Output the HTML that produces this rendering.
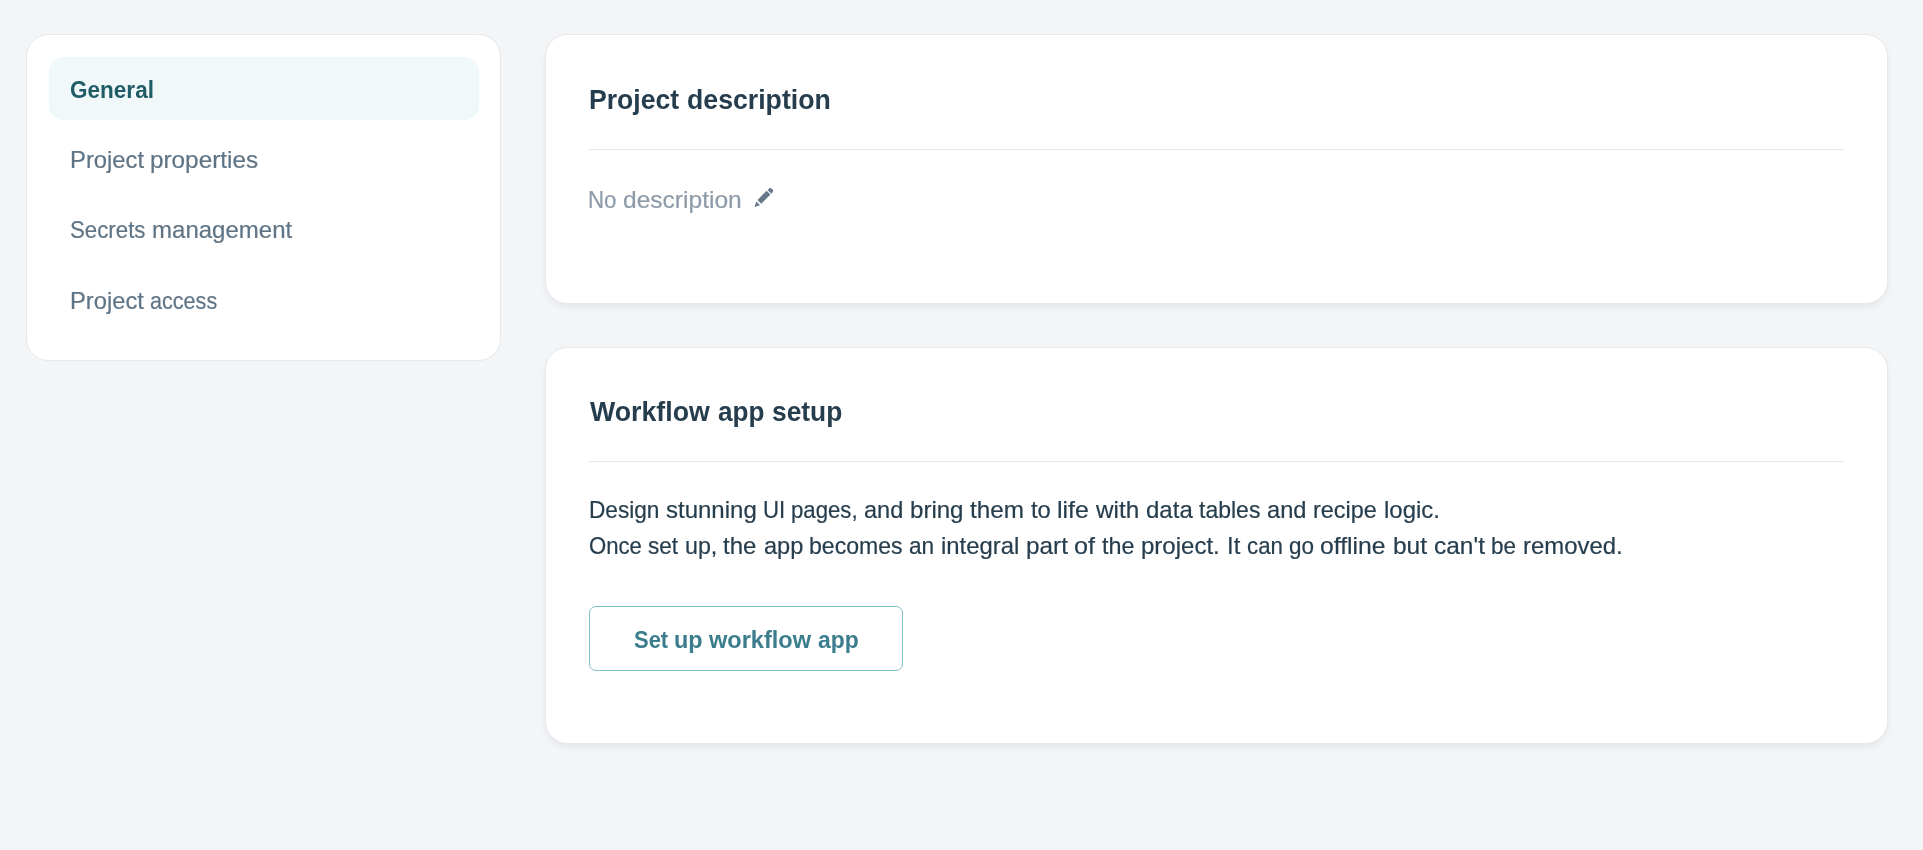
<!DOCTYPE html>
<html lang="en">
<head>
<meta charset="utf-8">
<title>Project settings</title>
<style>
  html, body { margin: 0; padding: 0; }
  body {
    width: 1923px; height: 850px; overflow: hidden; position: relative;
    background: #f3f5f7;
    font-family: "Liberation Sans", sans-serif;
    color: #263d4d;
  }
  .card {
    position: absolute; box-sizing: border-box;
    background: #fff; border: 1px solid #e5e9ec; border-radius: 22.4px;
  }
  .shadow { box-shadow: 0 4px 8px -2px rgba(40, 50, 60, 0.085); }
  .t {
    position: absolute; left: 0; width: 1923px; height: 30px; white-space: nowrap; margin: 0; will-change: transform;
    line-height: 30px; font-size: 24px; font-weight: normal; -webkit-text-stroke: 0.2px currentColor;
  }
  .t span { position: absolute; top: 0; display: block; transform-origin: 0 0; white-space: pre; }
  .b { font-weight: bold; -webkit-text-stroke: 0; }
  .h { -webkit-text-stroke: 0; font-size: 27.6px; font-weight: bold; line-height: 34px; height: 34px; color: #263d4d; }
  a.t { text-decoration: none; }
  .nav { color: #5f7485; }
  .pencil { position: absolute; left: 748px; top: 183px; }
  .active-bg { position: absolute; left: 49px; top: 57px; width: 430px; height: 63px; border-radius: 14.4px; background: #f0f8fa; }
  .hr { position: absolute; height: 1px; background: #e2e7eb; left: 589px; width: 1255px; }
  .btn { position: absolute; box-sizing: border-box; left: 589px; top: 606px; width: 314px; height: 65px; margin: 0; padding: 0; border: 1px solid #80c0c9; border-radius: 7px; background: #fff; font: inherit; color: inherit; text-align: left; overflow: visible; appearance: none; -webkit-appearance: none; cursor: pointer; }
</style>
</head>
<body>

<nav aria-label="Project settings">
  <div class="card" style="left:26px; top:34px; width:475px; height:327px;"></div>
  <div class="active-bg"></div>
  <a class="t b" role="link" tabindex="0" aria-current="page" style="top:75px; color:#1f5c66;"><span style="left:70.08px; transform:scaleX(0.9389);">General</span></a>
  <a class="t nav" role="link" tabindex="0" style="top:145px;"><span style="left:69.65px; transform:scaleX(0.9921);">Project </span><span style="left:150.33px; transform:scaleX(1.0124);">properties</span></a>
  <a class="t nav" role="link" tabindex="0" style="top:215px;"><span style="left:69.99px; transform:scaleX(0.9273);">Secrets </span><span style="left:151.50px; transform:scaleX(1.0013);">management</span></a>
  <a class="t nav" role="link" tabindex="0" style="top:286px;"><span style="left:69.65px; transform:scaleX(0.9886);">Project </span><span style="left:150.18px; transform:scaleX(0.8996);">access</span></a>
</nav>

<main>
  <section aria-label="Project description">
    <div class="card shadow" style="left:545px; top:34px; width:1343px; height:270px;"></div>
    <h2 class="t h" style="top:83px;"><span style="left:589.02px; transform:scaleX(0.9630);">Project </span><span style="left:686.51px; transform:scaleX(0.9670);">description</span></h2>
    <div class="hr" style="top:149px;"></div>
    <p class="t" style="top:185px; color:#8d9ba8;"><span style="left:588.47px; transform:scaleX(0.9289);">No </span><span style="left:623.07px; transform:scaleX(1.0229);">description</span></p>
    <svg class="pencil" width="32" height="30" viewBox="748 183 32 30" role="img" aria-label="Edit description">
      <g transform="translate(754.5 206.8) rotate(-45)" fill="#65798a">
        <polygon points="-0.1,0.2 5.0,-2.5 5.0,2.9"/>
        <rect x="6.9" y="-2.75" width="13.0" height="5.4"/>
        <path d="M21.1 -2.6 H22.7 A2.3 2.3 0 0 1 25.0 -0.3 V0.35 A2.3 2.3 0 0 1 22.7 2.65 H21.1 Z"/>
      </g>
    </svg>
  </section>

  <section aria-label="Workflow app setup">
    <div class="card shadow" style="left:545px; top:347px; width:1343px; height:397px;"></div>
    <h2 class="t h" style="top:395px;"><span style="left:590.07px; transform:scaleX(0.9688);">Workflow </span><span style="left:717.83px; transform:scaleX(0.9473);">app </span><span style="left:771.57px; transform:scaleX(0.9552);">setup</span></h2>
    <div class="hr" style="top:461px;"></div>
    <p class="t" style="top:495px;"><span style="left:588.84px; transform:scaleX(0.9429);">Design </span><span style="left:665.53px; transform:scaleX(1.0001);">stunning </span><span style="left:763.09px; transform:scaleX(0.9255);">UI </span><span style="left:791.47px; transform:scaleX(0.9246);">pages, </span><span style="left:864.20px; transform:scaleX(0.9801);">and </span><span style="left:909.95px; transform:scaleX(1.0025);">bring </span><span style="left:970.13px; transform:scaleX(1.0129);">them </span><span style="left:1030.94px; transform:scaleX(0.9879);">to </span><span style="left:1057.22px; transform:scaleX(1.0394);">life </span><span style="left:1096.04px; transform:scaleX(1.0121);">with </span><span style="left:1145.99px; transform:scaleX(1.0012);">data </span><span style="left:1199.45px; transform:scaleX(0.9584);">tables </span><span style="left:1267.20px; transform:scaleX(0.9855);">and </span><span style="left:1313.24px; transform:scaleX(0.9770);">recipe </span><span style="left:1383.59px; transform:scaleX(0.9977);">logic.</span></p>
    <p class="t" style="top:531px;"><span style="left:589.35px; transform:scaleX(0.9219);">Once </span><span style="left:648.37px; transform:scaleX(0.9400);">set </span><span style="left:684.69px; transform:scaleX(0.9682);">up, </span><span style="left:723.44px; transform:scaleX(1.0003);">the </span><span style="left:763.50px; transform:scaleX(0.9823);">app </span><span style="left:809.41px; transform:scaleX(0.9611);">becomes </span><span style="left:909.44px; transform:scaleX(0.9426);">an </span><span style="left:940.80px; transform:scaleX(0.9950);">integral </span><span style="left:1025.73px; transform:scaleX(1.0130);">part </span><span style="left:1074.34px; transform:scaleX(1.0484);">of </span><span style="left:1102.35px; transform:scaleX(0.9730);">the </span><span style="left:1141.25px; transform:scaleX(1.0007);">project. </span><span style="left:1226.70px; transform:scaleX(0.9942);">It </span><span style="left:1246.65px; transform:scaleX(0.9283);">can </span><span style="left:1288.76px; transform:scaleX(0.9352);">go </span><span style="left:1319.86px; transform:scaleX(1.0302);">offline </span><span style="left:1392.72px; transform:scaleX(1.0202);">but </span><span style="left:1433.56px; transform:scaleX(1.0203);">can&#39;t </span><span style="left:1491.45px; transform:scaleX(0.9368);">be </span><span style="left:1522.61px; transform:scaleX(0.9963);">removed.</span></p>
    <button type="button" class="btn"><span class="t b" style="top:18px; left:-590px; color:#3b7d8c;"><span style="left:633.87px; transform:scaleX(0.9149);">Set </span><span style="left:674.05px; transform:scaleX(0.9759);">up </span><span style="left:709.17px; transform:scaleX(0.9808);">workflow </span><span style="left:817.73px; transform:scaleX(0.9541);">app</span></span></button>
  </section>
</main>

</body>
</html>
